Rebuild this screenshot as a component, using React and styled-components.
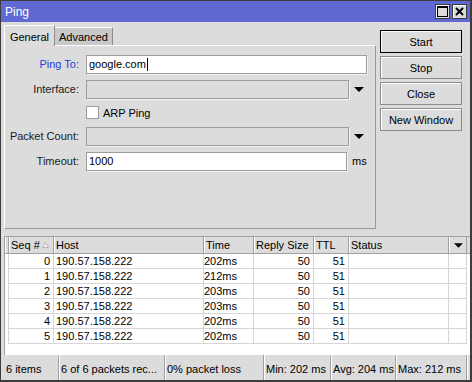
import React from 'react';
import styled, { createGlobalStyle } from 'styled-components';

const GlobalStyle = createGlobalStyle`
  html, body {
    margin: 0;
    padding: 0;
    background: #ffffff;
  }
  body {
    font-family: "Liberation Sans", Arial, sans-serif;
    font-size: 11px;
    color: #000;
  }
  * {
    box-sizing: border-box;
  }
`;

const rows = [
  { seq: 0, host: '190.57.158.222', time: '202ms', size: 50, ttl: 51 },
  { seq: 1, host: '190.57.158.222', time: '212ms', size: 50, ttl: 51 },
  { seq: 2, host: '190.57.158.222', time: '203ms', size: 50, ttl: 51 },
  { seq: 3, host: '190.57.158.222', time: '203ms', size: 50, ttl: 51 },
  { seq: 4, host: '190.57.158.222', time: '202ms', size: 50, ttl: 51 },
  { seq: 5, host: '190.57.158.222', time: '202ms', size: 50, ttl: 51 },
];

const statusCells = [
  { text: '6 items', width: 55 },
  { text: '6 of 6 packets rec...', width: 106 },
  { text: '0% packet loss', width: 99 },
  { text: 'Min: 202 ms', width: 67 },
  { text: 'Avg: 204 ms', width: 65 },
  { text: 'Max: 212 ms', width: 71 },
];

const DownArrow = ({ w = 10, h = 5 }) => (
  <svg width={w} height={h} viewBox="0 0 10 5">
    <polygon points="0,0 10,0 5,5" fill="#000" />
  </svg>
);

const App = () => {
  return (
    <>
      <GlobalStyle />
      <Window>
        <TitleBar>
          <TitleText>Ping</TitleText>
          <TitleButtons>
            <TitleButton>
              <svg width="11" height="11" viewBox="0 0 11 11">
                <rect x="0.5" y="0.5" width="10" height="10" fill="none" stroke="#000" />
                <line x1="0" y1="1.5" x2="11" y2="1.5" stroke="#000" />
              </svg>
            </TitleButton>
            <TitleButton>
              <svg width="9" height="9" viewBox="0 0 9 9">
                <path d="M1 1 L8 8 M8 1 L1 8" stroke="#000" strokeWidth="2" />
              </svg>
            </TitleButton>
          </TitleButtons>
        </TitleBar>

        <Body>
          <TopSection>
            <TabArea>
              <TabRow>
                <Tab $active $width={51}>General</Tab>
                <Tab $width={58}>Advanced</Tab>
              </TabRow>
              <Panel>
                <FieldRow>
                  <Label $highlight>Ping To:</Label>
                  <Field $width={281}>
                    google.com<Caret />
                  </Field>
                </FieldRow>
                <FieldRow>
                  <Label>Interface:</Label>
                  <Field $width={263} $disabled />
                  <ArrowCell>
                    <DownArrow />
                  </ArrowCell>
                </FieldRow>
                <CheckRow>
                  <Checkbox />
                  <CheckLabel>ARP Ping</CheckLabel>
                </CheckRow>
                <FieldRow>
                  <Label>Packet Count:</Label>
                  <Field $width={263} $disabled />
                  <ArrowCell>
                    <DownArrow />
                  </ArrowCell>
                </FieldRow>
                <FieldRow>
                  <Label>Timeout:</Label>
                  <Field $width={261}>1000</Field>
                  <Unit>ms</Unit>
                </FieldRow>
              </Panel>
            </TabArea>

            <ButtonColumn>
              <Button $default>Start</Button>
              <Button>Stop</Button>
              <Button>Close</Button>
              <Button>New Window</Button>
            </ButtonColumn>
          </TopSection>

          <Table>
            <HeaderRow>
              <HeaderCell />
              <HeaderCell>
                Seq #
                <SortMark>
                  <svg width="7" height="6" viewBox="0 0 7 6">
                    <polygon points="3.5,0.5 6.5,5.5 0.5,5.5" fill="#f4f4f4" stroke="#b4b4b4" />
                  </svg>
                </SortMark>
              </HeaderCell>
              <HeaderCell>Host</HeaderCell>
              <HeaderCell>Time</HeaderCell>
              <HeaderCell>Reply Size</HeaderCell>
              <HeaderCell>TTL</HeaderCell>
              <HeaderCell>Status</HeaderCell>
              <HeaderCell $center>
                <DownArrow w={9} h={5} />
              </HeaderCell>
            </HeaderRow>
            {rows.map((r) => (
              <DataRow key={r.seq}>
                <Cell $lead />
                <Cell $right>{r.seq}</Cell>
                <Cell>{r.host}</Cell>
                <Cell $tight>{r.time}</Cell>
                <Cell $right>{r.size}</Cell>
                <Cell $right>{r.ttl}</Cell>
                <Cell />
                <Cell />
              </DataRow>
            ))}
          </Table>

          <StatusBar>
            {statusCells.map((c) => (
              <StatusCell key={c.text} $width={c.width}>
                {c.text}
              </StatusCell>
            ))}
          </StatusBar>
        </Body>
      </Window>
    </>
  );
};

// Styled Components
const Window = styled.div`
  width: 472px;
  height: 382px;
  display: flex;
  flex-direction: column;
  background: #dcdcdc;
  border-style: solid;
  border-color: #3c3c3c;
  border-width: 1px 2px 2px 1px;
  overflow: hidden;
`;

const TitleBar = styled.div`
  height: 21px;
  flex: none;
  display: flex;
  align-items: center;
  justify-content: space-between;
  padding: 0 3px 0 4px;
  background: #6068d4;
`;

const TitleText = styled.span`
  color: #ffffff;
  font-size: 12px;
`;

const TitleButtons = styled.div`
  display: flex;
  gap: 2px;
`;

const TitleButton = styled.div`
  width: 15px;
  height: 15px;
  display: flex;
  align-items: center;
  justify-content: center;
  background: #dcdcdc;
  border: 1px solid #3c3c3c;
  box-shadow: inset 1px 1px 0 #ffffff;
`;

const Body = styled.div`
  flex: 1;
  display: flex;
  flex-direction: column;
  padding-left: 2px;
`;

const TopSection = styled.div`
  height: 204px;
  flex: none;
  display: flex;
  gap: 4px;
  margin-top: 3px;
  padding-left: 1px;
`;

const TabArea = styled.div`
  width: 372px;
  display: flex;
  flex-direction: column;
`;

const TabRow = styled.div`
  height: 20px;
  display: flex;
  align-items: flex-end;
`;

const Tab = styled.div`
  position: relative;
  z-index: ${(p) => (p.$active ? 2 : 1)};
  width: ${(p) => p.$width}px;
  height: ${(p) => (p.$active ? '21px' : '18px')};
  margin-bottom: ${(p) => (p.$active ? '-1px' : '0')};
  padding-top: ${(p) => (p.$active ? '5px' : '3px')};
  text-align: center;
  background: ${(p) => (p.$active ? '#dcdcdc' : '#c9c9c9')};
  border-top: 1px solid #ffffff;
  border-left: ${(p) => (p.$active ? '1px solid #ffffff' : 'none')};
  border-right: 1px solid #8c8c8c;
  font-size: 11px;
  color: #000;
`;

const Panel = styled.div`
  flex: 1;
  display: flex;
  flex-direction: column;
  gap: 7px;
  padding-top: 9px;
  border-top: 1px solid #ffffff;
  border-left: 1px solid #ffffff;
  border-right: 1px solid #9a9a9a;
  border-bottom: 1px solid #9a9a9a;
`;

const FieldRow = styled.div`
  height: 18px;
  display: flex;
  align-items: center;
`;

const Label = styled.div`
  width: 75px;
  padding-right: 1px;
  margin-right: 6px;
  text-align: right;
  font-size: 11px;
  color: ${(p) => (p.$highlight ? '#1c3fe0' : '#1a1a1a')};
`;

const Field = styled.div`
  width: ${(p) => p.$width}px;
  height: 19px;
  display: flex;
  align-items: center;
  padding-left: 2px;
  background: ${(p) => (p.$disabled ? '#dcdcdc' : '#ffffff')};
  border: 1px solid #9c9c9c;
  box-shadow: 1px 1px 0 #f4f4f4;
  font-size: 11px;
  white-space: nowrap;
`;

const Caret = styled.span`
  display: inline-block;
  width: 1px;
  height: 13px;
  margin-left: 1px;
  background: #000;
`;

const ArrowCell = styled.div`
  width: 18px;
  display: flex;
  justify-content: center;
  padding-left: 1px;
`;

const Unit = styled.div`
  margin-left: 5px;
  font-size: 11px;
`;

const CheckRow = styled.div`
  height: 15px;
  display: flex;
  align-items: center;
  padding-left: 81px;
`;

const Checkbox = styled.div`
  width: 13px;
  height: 13px;
  background: #ffffff;
  border: 1px solid #9c9c9c;
`;

const CheckLabel = styled.span`
  margin-left: 4px;
  font-size: 11px;
`;

const ButtonColumn = styled.div`
  display: flex;
  flex-direction: column;
  gap: 3px;
  margin-top: 5px;
`;

const Button = styled.div`
  width: 82px;
  height: 23px;
  display: flex;
  align-items: center;
  justify-content: center;
  background: #dcdcdc;
  border: 1px solid ${(p) => (p.$default ? '#000000' : '#8a8a8a')};
  box-shadow: inset 1px 1px 0 #ffffff;
  font-size: 11px;
  color: #000;
`;

const Table = styled.div`
  height: 119px;
  flex: none;
  margin-top: 7px;
  margin-left: 1px;
  width: 466px;
  background: #ffffff;
  border-top: 1px solid #a0a0a0;
  border-left: 1px solid #a0a0a0;
`;

const columns = '4px 45px 150px 50px 60px 35px 100px 18px';

const HeaderRow = styled.div`
  display: grid;
  grid-template-columns: ${columns};
  height: 17px;
  background: #dcdcdc;
  border-bottom: 1px solid #a0a0a0;
`;

const HeaderCell = styled.div`
  position: relative;
  display: flex;
  align-items: center;
  justify-content: ${(p) => (p.$center ? 'center' : 'flex-start')};
  padding-left: 2px;
  border-right: 1px solid #a0a0a0;
  box-shadow: inset 1px 0 0 #ffffff;
  font-size: 11px;
  white-space: nowrap;
  overflow: hidden;
`;

const SortMark = styled.span`
  position: absolute;
  right: 4px;
  top: 5px;
  display: flex;
`;

const DataRow = styled.div`
  display: grid;
  grid-template-columns: ${columns};
  height: 15px;
`;

const Cell = styled.div`
  display: flex;
  align-items: center;
  justify-content: ${(p) => (p.$right ? 'flex-end' : 'flex-start')};
  padding: ${(p) => (p.$right ? '0 3px 0 0' : p.$tight ? '0 0 0 0' : '0 0 0 2px')};
  border-right: 1px solid #d6d6d6;
  border-bottom: ${(p) => (p.$lead ? 'none' : '1px solid #d6d6d6')};
  font-size: 11px;
  white-space: nowrap;
  overflow: hidden;
`;

const StatusBar = styled.div`
  flex: 1;
  display: flex;
  padding-left: 1px;
`;

const StatusCell = styled.div`
  width: ${(p) => p.$width}px;
  display: flex;
  align-items: center;
  padding: 3px 0 0 2px;
  border-right: 1px solid #a0a0a0;
  box-shadow: 1px 0 0 #ffffff;
  font-size: 11px;
  white-space: nowrap;
  overflow: hidden;
`;

export default App;
